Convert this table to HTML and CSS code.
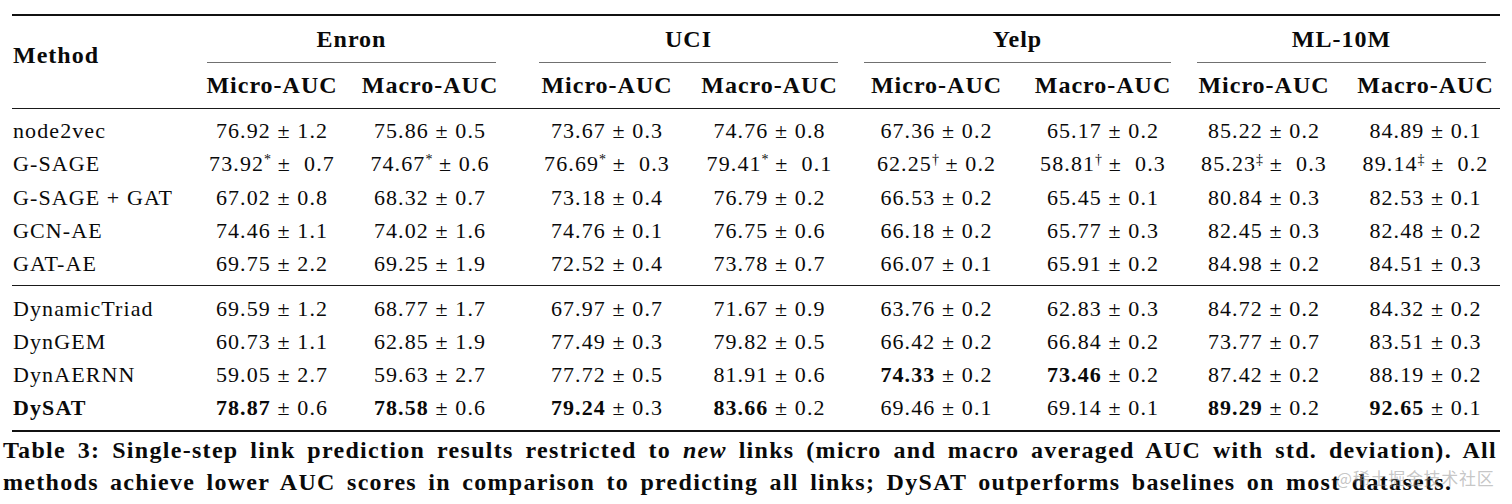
FILE: index.html
```html
<!DOCTYPE html>
<html lang="en">
<head>
<meta charset="utf-8">
<title>Table 3</title>
<link rel="stylesheet" href="styles.css">
</head>
<body>
<div class="page">
  <div class="table">
    <div class="thead">
      <div class="method">Method</div>
      <div class="group g-enron">Enron</div>
      <div class="group g-uci">UCI</div>
      <div class="group g-yelp">Yelp</div>
      <div class="group g-ml">ML-10M</div>
      <div class="sub"><span>Micro-AUC</span></div>
      <div class="sub"><span>Macro-AUC</span></div>
      <div class="sub"><span>Micro-AUC</span></div>
      <div class="sub"><span>Macro-AUC</span></div>
      <div class="sub"><span>Micro-AUC</span></div>
      <div class="sub"><span>Macro-AUC</span></div>
      <div class="sub"><span>Micro-AUC</span></div>
      <div class="sub"><span>Macro-AUC</span></div>
    </div>
    <div class="tbody tbody-static">
      <div class="row"><div class="name">node2vec</div>
        <div class="cell"><span>76.92 ± 1.2</span></div><div class="cell"><span>75.86 ± 0.5</span></div>
        <div class="cell"><span>73.67 ± 0.3</span></div><div class="cell"><span>74.76 ± 0.8</span></div>
        <div class="cell"><span>67.36 ± 0.2</span></div><div class="cell"><span>65.17 ± 0.2</span></div>
        <div class="cell"><span>85.22 ± 0.2</span></div><div class="cell"><span>84.89 ± 0.1</span></div></div>
      <div class="row"><div class="name">G-SAGE</div>
        <div class="cell"><span>73.92<sup>*</sup> ±&nbsp; 0.7</span></div><div class="cell"><span>74.67<sup>*</sup> ± 0.6</span></div>
        <div class="cell"><span>76.69<sup>*</sup> ±&nbsp; 0.3</span></div><div class="cell"><span>79.41<sup>*</sup> ±&nbsp; 0.1</span></div>
        <div class="cell"><span>62.25<sup>†</sup> ± 0.2</span></div><div class="cell"><span>58.81<sup>†</sup> ±&nbsp; 0.3</span></div>
        <div class="cell"><span>85.23<sup>‡</sup> ±&nbsp; 0.3</span></div><div class="cell"><span>89.14<sup>‡</sup> ±&nbsp; 0.2</span></div></div>
      <div class="row"><div class="name">G-SAGE + GAT</div>
        <div class="cell"><span>67.02 ± 0.8</span></div><div class="cell"><span>68.32 ± 0.7</span></div>
        <div class="cell"><span>73.18 ± 0.4</span></div><div class="cell"><span>76.79 ± 0.2</span></div>
        <div class="cell"><span>66.53 ± 0.2</span></div><div class="cell"><span>65.45 ± 0.1</span></div>
        <div class="cell"><span>80.84 ± 0.3</span></div><div class="cell"><span>82.53 ± 0.1</span></div></div>
      <div class="row"><div class="name">GCN-AE</div>
        <div class="cell"><span>74.46 ± 1.1</span></div><div class="cell"><span>74.02 ± 1.6</span></div>
        <div class="cell"><span>74.76 ± 0.1</span></div><div class="cell"><span>76.75 ± 0.6</span></div>
        <div class="cell"><span>66.18 ± 0.2</span></div><div class="cell"><span>65.77 ± 0.3</span></div>
        <div class="cell"><span>82.45 ± 0.3</span></div><div class="cell"><span>82.48 ± 0.2</span></div></div>
      <div class="row"><div class="name">GAT-AE</div>
        <div class="cell"><span>69.75 ± 2.2</span></div><div class="cell"><span>69.25 ± 1.9</span></div>
        <div class="cell"><span>72.52 ± 0.4</span></div><div class="cell"><span>73.78 ± 0.7</span></div>
        <div class="cell"><span>66.07 ± 0.1</span></div><div class="cell"><span>65.91 ± 0.2</span></div>
        <div class="cell"><span>84.98 ± 0.2</span></div><div class="cell"><span>84.51 ± 0.3</span></div></div>
    </div>
    <div class="tbody tbody-dynamic">
      <div class="row"><div class="name">DynamicTriad</div>
        <div class="cell"><span>69.59 ± 1.2</span></div><div class="cell"><span>68.77 ± 1.7</span></div>
        <div class="cell"><span>67.97 ± 0.7</span></div><div class="cell"><span>71.67 ± 0.9</span></div>
        <div class="cell"><span>63.76 ± 0.2</span></div><div class="cell"><span>62.83 ± 0.3</span></div>
        <div class="cell"><span>84.72 ± 0.2</span></div><div class="cell"><span>84.32 ± 0.2</span></div></div>
      <div class="row"><div class="name">DynGEM</div>
        <div class="cell"><span>60.73 ± 1.1</span></div><div class="cell"><span>62.85 ± 1.9</span></div>
        <div class="cell"><span>77.49 ± 0.3</span></div><div class="cell"><span>79.82 ± 0.5</span></div>
        <div class="cell"><span>66.42 ± 0.2</span></div><div class="cell"><span>66.84 ± 0.2</span></div>
        <div class="cell"><span>73.77 ± 0.7</span></div><div class="cell"><span>83.51 ± 0.3</span></div></div>
      <div class="row"><div class="name">DynAERNN</div>
        <div class="cell"><span>59.05 ± 2.7</span></div><div class="cell"><span>59.63 ± 2.7</span></div>
        <div class="cell"><span>77.72 ± 0.5</span></div><div class="cell"><span>81.91 ± 0.6</span></div>
        <div class="cell"><span><b>74.33</b> ± 0.2</span></div><div class="cell"><span><b>73.46</b> ± 0.2</span></div>
        <div class="cell"><span>87.42 ± 0.2</span></div><div class="cell"><span>88.19 ± 0.2</span></div></div>
      <div class="row"><div class="name"><b>DySAT</b></div>
        <div class="cell"><span><b>78.87</b> ± 0.6</span></div><div class="cell"><span><b>78.58</b> ± 0.6</span></div>
        <div class="cell"><span><b>79.24</b> ± 0.3</span></div><div class="cell"><span><b>83.66</b> ± 0.2</span></div>
        <div class="cell"><span>69.46 ± 0.1</span></div><div class="cell"><span>69.14 ± 0.1</span></div>
        <div class="cell"><span><b>89.29</b> ± 0.2</span></div><div class="cell"><span><b>92.65</b> ± 0.1</span></div></div>
    </div>
  </div>
  <div class="caption">
    <span class="cap-line cap-first">Table 3: Single-step link prediction results restricted to <i>new</i> links (micro and macro averaged AUC with std. deviation). All</span>
    <span class="cap-line cap-last">methods achieve lower AUC scores in comparison to predicting all links; DySAT outperforms baselines on most datasets.</span>
  </div>
  <span class="watermark">@稀土掘金技术社区</span>
</div>
</body>
</html>
```
FILE: styles.css
```css
html, body {
  margin: 0;
  padding: 0;
  background: #ffffff;
}

.page {
  position: relative;
  width: 1512px;
  height: 504px;
  overflow: hidden;
  font-family: "Liberation Serif", "Times New Roman", serif;
  color: #0a0a0a;
}

.table {
  margin: 14px 0 0 12px;
  width: 1488px;
  border-top: 2px solid #111;
  border-bottom: 2px solid #111;
}

.thead,
.row {
  display: grid;
  grid-template-columns: 182px 156px 160px 194px 131px 203px 130px 192px 131px;
}

.thead {
  border-bottom: 1px solid #1a1a1a;
  font-weight: bold;
  font-size: 24px;
  line-height: 30px;
  letter-spacing: 1px;
  white-space: nowrap;
}

.method {
  grid-row: 1 / span 2;
  grid-column: 1;
  padding: 24px 0 0 1px;
}

.group {
  grid-column: span 2;
  text-align: center;
  padding: 8px 0;
  border-bottom: 1px solid #707070;
}

.g-enron { margin: 0 14px 0 13px; }
.g-uci   { margin: 0 -3px 0 29px; }
.g-yelp  { margin: 0 -3px 0 29px; }
.g-ml    { margin: 0 5px 0 29px; }

.sub {
  display: flex;
  justify-content: center;
  padding: 7px 0 8px;
}

.tbody {
  font-size: 22px;
  letter-spacing: 1.1px;
  white-space: nowrap;
}

.tbody-static {
  padding: 5px 0;
  border-bottom: 1px solid #1a1a1a;
}

.tbody-static .row {
  line-height: 33.25px;
}

.tbody-dynamic {
  padding: 6px 0;
}

.tbody-dynamic .row {
  line-height: 33px;
}

.name {
  padding-left: 1px;
}

.cell {
  display: flex;
  justify-content: center;
}

sup {
  font-size: 14px;
  line-height: 0;
  vertical-align: 0.5em;
  letter-spacing: 0;
}

.caption {
  margin: 2px 0 0 3px;
  width: 1494px;
  font-weight: bold;
  font-size: 24px;
  line-height: 32px;
  letter-spacing: 1.3px;
  word-spacing: 4px;
  white-space: nowrap;
}

.cap-line {
  display: block;
}

.cap-first {
  text-align: justify;
  text-align-last: justify;
}

.watermark {
  position: absolute;
  left: 1336px;
  top: 467px;
  font-family: "Noto Sans CJK SC", "Noto Sans", sans-serif;
  font-size: 17px;
  line-height: 22px;
  letter-spacing: 0.7px;
  color: rgba(150, 150, 150, 0.55);
  white-space: nowrap;
}
```
